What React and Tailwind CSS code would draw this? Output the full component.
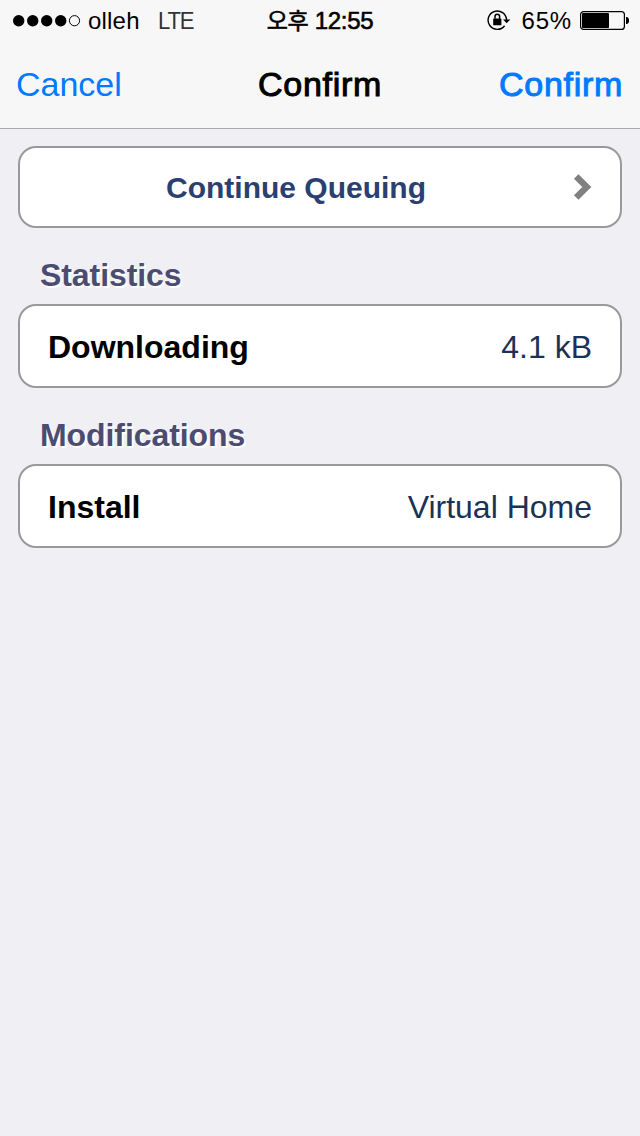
import React from "react";

const sections = [
  { title: "Statistics", label: "Downloading", value: "4.1 kB" },
  { title: "Modifications", label: "Install", value: "Virtual Home" },
];

const RotationLock = () => (
  <svg width="24" height="22" viewBox="0 0 24 22" fill="none">
    <path
      d="M17.6 15.8A9.2 9.2 0 1 1 19.5 10"
      stroke="black"
      strokeWidth="1.4"
    />
    <path d="M16 9.4h7.4l-3.7 3.8z" fill="black" />
    <rect x="6.2" y="8.4" width="8.2" height="6.8" rx="0.5" fill="black" />
    <path d="M8 8.8V6.6a2.3 2.3 0 0 1 4.6 0v2.2" stroke="black" strokeWidth="1.5" />
  </svg>
);

const Battery = () => (
  <svg width="49" height="20" viewBox="0 0 49 20" fill="none">
    <rect x="0.6" y="0.6" width="43.8" height="17.8" rx="3" stroke="black" strokeWidth="1.2" />
    <rect x="2" y="2" width="27" height="15" rx="0.8" fill="black" />
    <path d="M46 6h0.8c3 0.6 3 6.4 0 7H46z" fill="black" />
  </svg>
);

const StatusBar = () => (
  <div className="grid h-10 grid-cols-[1fr_auto_1fr] items-center pt-px pr-[11px] pl-[13px] text-2xl leading-10">
    <div className="flex items-center">
      <svg width="68" height="12" viewBox="0 0 68 12">
        {[6, 20, 34, 48].map((x) => (
          <circle key={x} cx={x - 0.3} cy="5.7" r="5.7" />
        ))}
        <circle cx="61.5" cy="5.7" r="5.1" fill="none" stroke="black" strokeWidth="1" />
      </svg>
      <span className="ml-[7px] tracking-[0.2px]">olleh</span>
      <span className="ml-[18px] origin-left scale-x-[0.92] tracking-[-1.3px] text-[#333]">LTE</span>
    </div>
    <div className="pr-[2px] tracking-[-0.3px] [-webkit-text-stroke:0.6px_black]">
      <span className="text-[23px] leading-none">오후</span> 12:55
    </div>
    <div className="flex items-center justify-end">
      <RotationLock />
      <span className="mr-[8px] ml-[11px] tracking-[0.8px]">65%</span>
      <Battery />
    </div>
  </div>
);

const NavBar = () => (
  <div className="grid h-[89px] grid-cols-[1fr_auto_1fr] border-b border-[#a9a9ad] px-4 text-[34px] leading-[89px] text-[#007aff]">
    <button className="text-left">Cancel</button>
    <h1 className="tracking-[0.7px] text-black [-webkit-text-stroke:1px_black]">Confirm</h1>
    <button className="pr-px text-right tracking-[0.7px] [-webkit-text-stroke:1px_#007aff]">Confirm</button>
  </div>
);

const App = () => {
  return (
    <div className="min-h-screen bg-[#efeff4] font-['Liberation_Sans','Noto_Sans_CJK_KR',sans-serif] text-black">
      <header className="bg-[#f7f7f7]">
        <StatusBar />
        <NavBar />
      </header>

      <main className="px-[18px] pt-[17px]">
        <button className="flex h-[82px] w-full items-center rounded-[18px] border-2 border-[#999] bg-white pr-7 text-[30px] font-bold text-[#2b3f70]">
          <span className="flex-1 pr-px text-center">Continue Queuing</span>
          <svg width="19" height="28" viewBox="0 0 19 28" fill="none">
            <path d="M3.2 3.4 13.8 14 3.2 24.6" stroke="#808080" strokeWidth="6.4" />
          </svg>
        </button>

        {sections.map((s) => (
          <section key={s.title} className="text-[32px]">
            <h2 className="h-[76px] pl-[22px] leading-[94px] font-bold tracking-[-0.08px] text-[#4c4c70] [text-shadow:2px_2px_1px_white]">
              {s.title}
            </h2>
            <div className="flex h-[84px] items-center justify-between rounded-[18px] border-2 border-[#999] bg-white px-7 pt-[2px]">
              <span className="font-bold">{s.label}</span>
              <span className="text-[#1a3355]">{s.value}</span>
            </div>
          </section>
        ))}
      </main>
    </div>
  );
};

export default App;
